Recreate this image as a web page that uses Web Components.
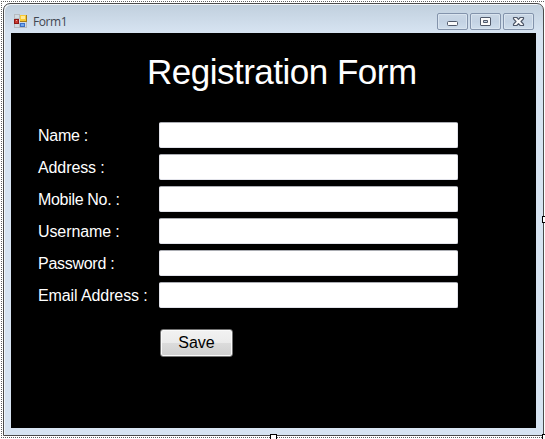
<!DOCTYPE html>
<html lang="en"><head><meta charset="utf-8"><title>Form1</title>
<style>
html,body{margin:0;width:545px;height:439px;overflow:hidden;background:#fff}
body{font-family:"Liberation Sans",Arial,sans-serif}
</style></head><body>
<design-surface>
<form-window>
<title-bar slot="bar">Form1</title-bar>
<form-title>Registration Form</form-title>
<form-rows>
<field-row class="snug">Name :</field-row><field-row>Address :</field-row><field-row class="tight">Mobile No. :</field-row><field-row>Username :</field-row><field-row class="snug">Password :</field-row><field-row>Email Address :</field-row>
</form-rows>
<push-button>Save</push-button>
</form-window>
</design-surface>
<script>
const define = (name, html) => customElements.define(name, class extends HTMLElement {
  constructor() { super(); this.attachShadow({mode: 'open'}).innerHTML = html; }
});

define('design-surface', `<style>
:host{display:block;box-sizing:border-box;position:relative;width:545px;height:439px;padding:3px 1px 3px 3px;
background:repeating-linear-gradient(90deg,#fff 0 1px,#606060 1px 2px) 0 1px/100% 1px no-repeat,
repeating-linear-gradient(90deg,#fff 0 1px,#606060 1px 2px) 0 437px/100% 1px no-repeat,
repeating-linear-gradient(#fff 0 1px,#606060 1px 2px) 1px 0/1px 100% no-repeat,#fff}
i{position:absolute;box-sizing:border-box;width:7px;height:7px;background:#fff;border:1px solid #000}
.s{left:270px;top:434px}.e{left:542px;top:216px}.c{left:542px;top:434px}
</style><slot></slot><i class="s"></i><i class="e"></i><i class="c"></i>`);

define('form-window', `<style>
:host{display:flex;flex-direction:column;box-sizing:border-box;width:541px;height:433px;border:1px solid #4b4b4b;border-radius:7px 7px 0 0;
background:linear-gradient(#c0cfdd 0,#d7e4f2 29px,#d7e4f2);box-shadow:inset 1px 1px 0 #f1f5f9;padding:0 7px 7px}
main{flex:1;background:#000;color:#fff;padding:0 0 0 27px;overflow:hidden}
</style><slot name="bar"></slot><main><slot></slot></main>`);

define('title-bar', `<style>
:host{display:flex;align-items:flex-start;box-sizing:border-box;height:29px;flex:none;padding:9px 2px 0 2px;font:12px/17px "Open Sans","Noto Sans",sans-serif;color:#3f4650}
svg{display:block}.app{margin:1px 5px 0 1px}.t{flex:1;letter-spacing:-.4px}
div{display:flex;gap:2px}
b{display:grid;place-items:center;box-sizing:border-box;width:31px;height:17px;border:1px solid #8393ab;border-radius:2px;background:linear-gradient(#cad7e5,#c3d2e3 50%,#ceddec);box-shadow:inset 0 0 0 1px #d9e4ef}
</style>
<svg class="app" width="14" height="14" shape-rendering="crispEdges"><path d="M.5.5h5v4h-5zM.5 9.500h5v4h-5zM12.500 8v5.500H6" fill="#d1dae2" stroke="#b6bbc0"/>
<rect y="5" width="5" height="5" fill="#8f1714"/><rect x="1" y="6" width="3" height="3" fill="#c63b32"/><rect x="2" y="6" width="1" height="1" fill="#f3aaa0"/>
<rect x="6" y="1" width="7" height="7" fill="#a87c16"/><rect x="6" y="1" width="6" height="6" fill="#f8c933"/><rect x="7" y="2" width="4" height="3" fill="#ffe994"/>
<rect x="6" y="9" width="5" height="4" fill="#3b6fc5"/><rect x="7" y="10" width="3" height="2" fill="#73a8ee"/></svg>
<span class="t"><slot></slot></span>
<div><b><svg width="29" height="15"><rect x="9.500" y="7.500" width="10" height="4" rx="1" fill="#fafafa" stroke="#50596a"/></svg></b>
<b><svg width="29" height="15"><path fill="#fafafa" fill-rule="evenodd" stroke="#50596a" d="M10 3.500h9q.5 0 .5.500v7q0 .5-.5.500h-9q-.5 0-.5-.500V4q0-.5.5-.500zM12.500 6.500v2h4v-2z"/></svg></b>
<b><svg width="29" height="15"><path fill="#fafafa" stroke="#50596a" stroke-width="1.200" stroke-linejoin="round" d="M9.500 3.500h3.300L14.500 5.300 16.200 3.500h3.300v1.300L17 7.500l2.500 2.700v1.300h-3.300L14.500 9.700 12.800 11.500H9.500v-1.300L12 7.500 9.500 4.800z"/></svg></b></div>`);

define('form-title', `<style>:host{display:block;margin-left:109px;padding-top:18px;height:71px;font-size:35px;line-height:42px;white-space:nowrap;letter-spacing:-.5px}</style><slot></slot>`);
define('form-rows', `<style>:host{display:flex;flex-direction:column;gap:6px}</style><slot></slot>`);
define('field-row', `<style>
:host{display:flex;height:26px;font-size:16px;line-height:27px;letter-spacing:-.1px}
:host(.snug){letter-spacing:-.28px}:host(.tight){letter-spacing:-.32px}
label{width:121px;white-space:nowrap}
input{box-sizing:border-box;width:299px;height:26px;margin:0;padding:2px;border:1px solid #e2e3ea;border-top-color:#abadb3;border-radius:2px;background:#fff;outline:0}
</style><label><slot></slot></label><input type="text" aria-label="Field">`);
define('push-button', `<style>
:host{display:block;margin:21px 0 0 122px}
button{display:block;box-sizing:border-box;width:73px;height:28px;margin:0;padding:0;border:1px solid #707070;border-radius:3px;box-shadow:inset 0 0 0 1px #fafafa;background:linear-gradient(#f2f2f2,#ebebeb 48%,#dcdcdc 50%,#cfcfcf);font:16px/26px "Liberation Sans",Arial,sans-serif;color:#000}
</style><button type="button"><slot></slot></button>`);
</script></body></html>
